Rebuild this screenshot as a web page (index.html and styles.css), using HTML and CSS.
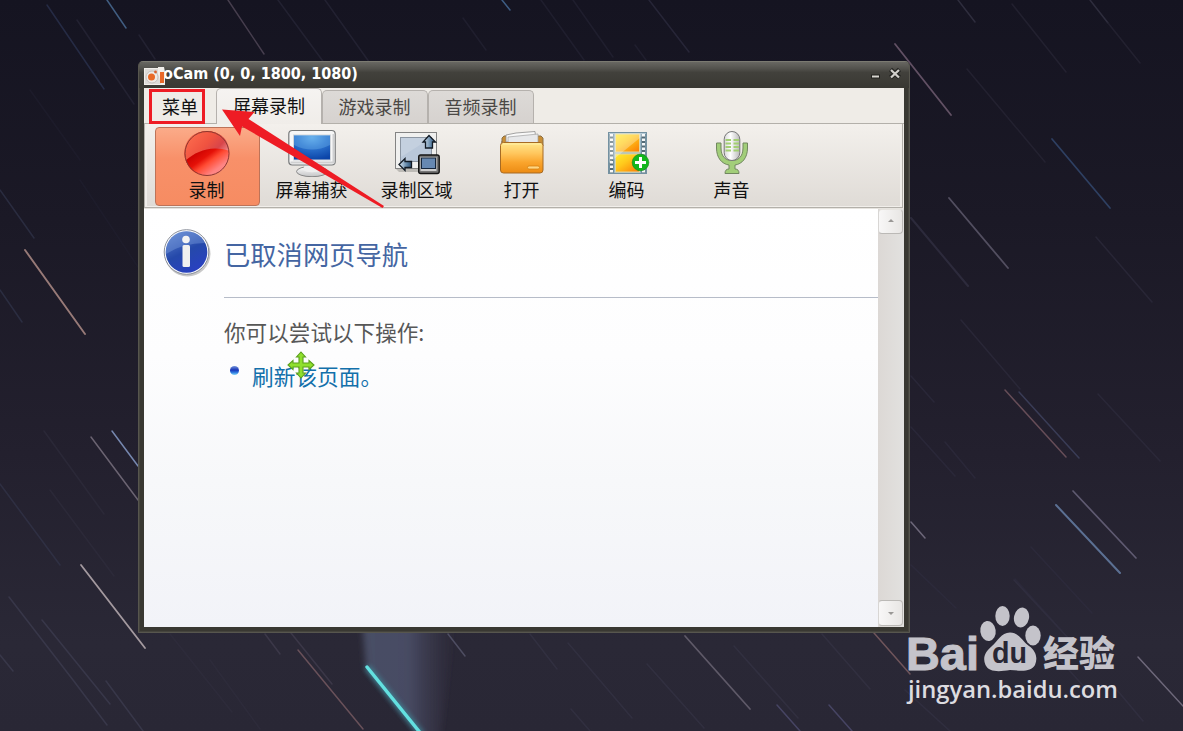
FILE: index.html
```html
<!DOCTYPE html>
<html lang="zh-CN">
<head>
  <meta charset="UTF-8" />
  <meta name="viewport" content="width=device-width, initial-scale=1" />
  <title>oCam</title>
  <link rel="stylesheet" href="styles.css">
</head>
<body>
  <div class="desktop">
    <svg class="sky" viewBox="0 0 1183 731" width="1183" height="731">
      <defs>
        <linearGradient id="tail" x1="0" y1="0" x2="1" y2="0">
          <stop offset="0" stop-color="#555d78" stop-opacity="0.7" />
          <stop offset="0.5" stop-color="#545a76" stop-opacity="0.7" />
          <stop offset="1" stop-color="#453e54" stop-opacity="0" />
        </linearGradient>
        <filter id="soft" x="-30%" y="-30%" width="160%" height="160%"><feGaussianBlur stdDeviation="3" /></filter>
        <filter id="glow" x="-30%" y="-30%" width="160%" height="160%"><feGaussianBlur stdDeviation="2.5" /></filter>
      </defs>
      <path d="M362 620H456L440 740H424L366 668z" fill="url(#tail)" filter="url(#soft)" />
      <path d="M367 667L422 735" stroke="#3fa9b8" stroke-width="6" opacity="0.6" filter="url(#glow)" />
      <path d="M367 667L422 735" stroke="#63e0e0" stroke-width="3.4" stroke-linecap="round" />
      <g class="trails faint">
        <path d="M47 5L104 89" stroke="#303a5c" />
        <path d="M139 35L155 59M77 20L134 104M278 0L325 64M325 0L372 66" stroke="#2b2a3c" />
        <path d="M0 190L34 238M0 290L22 322" stroke="#343951" />
        <path d="M30 90L80 160M80 180L140 270" stroke="#201f2f" />
        <path d="M0 484L60 565" stroke="#35384f" />
        <path d="M9 597L73 680L107 725M106 681L146 735M42 620L110 704M0 655L13 671" stroke="#424257" />
        <path d="M44 431L104 514M50 490L114 576M170 634L232 712M210 660L260 729" stroke="#302e3e" />
        <path d="M291 633L332 684M265 634L280 654" stroke="#474254" />
        <path d="M649 0L689 52" stroke="#323146" />
        <path d="M463 18L486 50M541 0L584 60M573 0L613 57M635 45L646 60" stroke="#262536" />
        <path d="M958 0L975 22M1090 0L1108 23" stroke="#3f3e50" />
        <path d="M1012 4L1066 72M967 69L1045 162M1108 23L1140 63" stroke="#2b2939" />
        <path d="M911 218L968 286" stroke="#38364a" stroke-width="2" />
        <path d="M1096 237L1152 302M961 320L1020 389M1098 394L1160 461" stroke="#302e40" />
        <path d="M911 376L934 402M911 427L955 476M945 442L975 478M911 565L956 608M1031 547L1092 613M1015 579L1062 631" stroke="#2f2d40" />
        <path d="M568 643L632 718M647 664L704 728M734 646L798 718M822 634L870 689M571 709L590 731M530 634L557 669" stroke="#373547" />
        <path d="M1014 580L1070 640M1117 690L1143 721M1060 660L1095 699M905 690L950 731" stroke="#353346" />
      </g>
      <g class="trails bright">
        <path d="M107 0L126 28" stroke="#47688f" />
        <path d="M228 0L264 54" stroke="#4d4454" />
        <path d="M25 250L85 334" stroke="#a98883" stroke-width="1.9" />
        <path d="M112 431L138 466" stroke="#8296c1" />
        <path d="M91 437L138 500" stroke="#756d7b" />
        <path d="M81 565L145 648" stroke="#b5aaae" stroke-width="1.8" />
        <path d="M298 650L363 729" stroke="#72575f" />
        <path d="M502 0L510 10" stroke="#436791" />
        <path d="M895 44L951 115" stroke="#6c596d" stroke-width="1.8" />
        <path d="M1052 139L1110 208" stroke="#31466b" stroke-width="1.7" />
        <path d="M949 198L1008 268" stroke="#5a5668" stroke-width="1.8" />
        <path d="M1005 390L1066 457" stroke="#70545e" />
        <path d="M1019 392L1079 458" stroke="#3d405c" />
        <path d="M1073 491L1136 558" stroke="#67627a" stroke-width="1.7" />
        <path d="M1056 505L1120 573" stroke="#637ba1" stroke-width="2" />
        <path d="M911 522L925 538M1138 657L1183 706" stroke="#777184" />
        <path d="M448 634L465 656" stroke="#535368" />
        <path d="M685 636L750 709" stroke="#67616f" stroke-width="1.7" />
        <path d="M777 705L800 731M829 705L852 731" stroke="#4b496a" />
        <path d="M874 633L910 674" stroke="#795b60" />
      </g>
    </svg>

    <div class="window">
      <div class="titlebar">
        <svg class="app-icon" viewBox="0 0 21 18" width="21" height="18">
          <path d="M0 1H14V0H20L21 5V18H0z" fill="#f1eeea" />
          <path d="M1 2H14V7L17 17H1z" fill="#dedbd8" />
          <circle cx="8" cy="10" r="6" fill="#eeeae7" stroke="#c6c1be" />
          <circle cx="7.5" cy="10" r="3.5" fill="#e96a28" />
          <circle cx="11.5" cy="5" r="1.4" fill="#d9622d" />
          <path d="M16 5h4v11h-4z" fill="#e8682a" />
        </svg>
        <span class="title">oCam (0, 0, 1800, 1080)</span>
        <svg class="controls" viewBox="0 0 32 14" width="32" height="14">
          <path d="M1 9.500h9" stroke="#22221f" stroke-width="4" />
          <path d="M2 9.500h7" stroke="#d8d6d1" stroke-width="2" />
          <path d="M20.500 2.500l9 8M29.500 2.500l-9 8" stroke="#252522" stroke-width="4.500" />
          <path d="M21 3l8 7.500M29 3l-8 7.500" stroke="#d2d0cb" stroke-width="2.300" />
        </svg>
      </div>

      <div class="client">
        <div class="tabs">
          <div class="menu">菜单</div>
          <div class="tab active">屏幕录制</div>
          <div class="tab">游戏录制</div>
          <div class="tab">音频录制</div>
        </div>

        <div class="toolbar">
          <div class="tool selected">
            <svg viewBox="0 0 48 48" width="48" height="48">
              <defs>
                <linearGradient id="recLow" x1="0.2" y1="0.25" x2="0.75" y2="1">
                  <stop offset="0.2" stop-color="#c90000" />
                  <stop offset="0.45" stop-color="#e51108" />
                  <stop offset="0.6" stop-color="#ff4a32" />
                  <stop offset="0.85" stop-color="#ff8584" />
                </linearGradient>
                <linearGradient id="recTop" x1="0" y1="0" x2="1" y2="0.6">
                  <stop offset="0" stop-color="#ff7352" />
                  <stop offset="0.55" stop-color="#f05340" />
                  <stop offset="0.8" stop-color="#d8454a" />
                  <stop offset="1" stop-color="#f08585" />
                </linearGradient>
              </defs>
              <circle cx="24" cy="24.500" r="22.500" fill="url(#recLow)" />
              <path d="M2.500 31.500C-2 14 9 2 24 2C37 2 46 11 46.400 22C28 16 14 22 2.500 31.500z" fill="url(#recTop)" />
              <circle cx="24" cy="24.500" r="22" fill="none" stroke="#8b3930" stroke-width="1" />
            </svg>
            <span>录制</span>
          </div>
          <div class="tool">
            <svg viewBox="0 0 48 48" width="48" height="48">
              <defs>
                <radialGradient id="scr" cx="0.5" cy="0.1" r="0.9">
                  <stop offset="0" stop-color="#61abeb" />
                  <stop offset="0.45" stop-color="#2e75cf" />
                  <stop offset="1" stop-color="#0b44a8" />
                </radialGradient>
                <linearGradient id="metal" x1="0" y1="0" x2="0" y2="1">
                  <stop offset="0" stop-color="#ffffff" />
                  <stop offset="1" stop-color="#c3c4c5" />
                </linearGradient>
              </defs>
              <ellipse cx="24" cy="42.500" rx="15.500" ry="5.200" fill="url(#metal)" stroke="#888" />
              <path d="M17 35h14l2 6c-4 3-14 3-18 0z" fill="#eeeeee" />
              <rect x="0.800" y="1.500" width="46.400" height="34.500" rx="3.500" fill="#f7f7f7" stroke="#77797a" stroke-width="1.200" />
              <path d="M2.500 33.500H45.500V5" fill="none" stroke="#cfd0d1" stroke-width="2" />
              <rect x="5.500" y="6" width="37" height="25" fill="url(#scr)" stroke="#d1d5da" />
              <path d="M6 6h36v10q-18 9-36 0z" fill="#75b9ef" opacity="0.350" />
            </svg>
            <span>屏幕捕获</span>
          </div>
          <div class="tool">
            <svg viewBox="0 0 48 48" width="48" height="48">
              <defs>
                <linearGradient id="arrowFill" x1="0" y1="0" x2="1" y2="0">
                  <stop offset="0" stop-color="#dce9f4" />
                  <stop offset="0.7" stop-color="#547b9f" />
                  <stop offset="1" stop-color="#2e4d6e" />
                </linearGradient>
              </defs>
              <path d="M3 40H42V43H6z" fill="#bdbbb6" />
              <rect x="2.500" y="3.500" width="41" height="36" fill="#f0f0ef" stroke="#838383" />
              <rect x="7.500" y="8.500" width="31" height="24" fill="#b9c7d9" stroke="#8c96a3" />
              <path d="M8 9H38L8 28z" fill="#cbd5e2" opacity="0.600" />
              <path d="M36 6.500L42.500 13H39.500V19H32.500V13H30z" fill="url(#arrowFill)" stroke="#111923" stroke-width="1.300" />
              <path d="M6 35.500L12 29.500V32.500H18.500V38.500H12V41.500z" fill="url(#arrowFill)" stroke="#111923" stroke-width="1.300" />
              <rect x="25.700" y="26" width="20.500" height="18.500" rx="2" fill="#777" stroke="#151515" stroke-width="1.400" />
              <rect x="27.500" y="28" width="16" height="14" fill="#cecece" />
              <rect x="28.500" y="29" width="14" height="10.500" fill="#6688b2" stroke="#15263d" />
            </svg>
            <span>录制区域</span>
          </div>
          <div class="tool">
            <svg viewBox="0 0 48 48" width="48" height="48">
              <defs>
                <linearGradient id="folder" x1="0" y1="0" x2="0" y2="1">
                  <stop offset="0" stop-color="#ffe78b" />
                  <stop offset="0.35" stop-color="#ffc75e" />
                  <stop offset="0.65" stop-color="#faa52d" />
                  <stop offset="1" stop-color="#ec8b13" />
                </linearGradient>
              </defs>
              <path d="M4 14V9L6 7H10V14M38 7H43L45 9V17H4V12" fill="#c98e35" stroke="#8b7047" />
              <path d="M8 6L18 4L37 2.500L38 13H8z" fill="#f9f9f9" stroke="#8e8e8e" stroke-width="0.800" />
              <path d="M10 8L40 5V14H10z" fill="#e7e8ea" stroke="#a0a0a0" stroke-width="0.700" />
              <rect x="2.500" y="13.500" width="42.500" height="30.500" rx="3" fill="url(#folder)" stroke="#a76b24" />
              <path d="M4.500 15h39" stroke="#fff0a5" />
              <rect x="29.500" y="37" width="12" height="3" rx="1.500" fill="#ffd682" stroke="#d17b0d" stroke-width="0.700" />
            </svg>
            <span>打开</span>
          </div>
          <div class="tool">
            <svg viewBox="0 0 48 48" width="48" height="48">
              <defs>
                <linearGradient id="film" x1="0.1" y1="0" x2="1" y2="1">
                  <stop offset="0" stop-color="#ffe92e" />
                  <stop offset="0.4" stop-color="#ffc91c" />
                  <stop offset="1" stop-color="#fb7904" />
                </linearGradient>
              </defs>
              <rect x="5.500" y="3.500" width="38" height="41" fill="#98b7c7" stroke="#7491a1" />
              <path d="M8.500 5V44M40.500 5V44" stroke="#536a76" stroke-width="4" />
              <path d="M8.500 5V44M40.500 5V44" stroke="#f5f7f8" stroke-width="3" stroke-dasharray="2.600 1.900" />
              <rect x="12.500" y="5" width="24" height="18" fill="url(#film)" stroke="#e2d7a1" />
              <rect x="12.500" y="25" width="24" height="18" fill="url(#film)" stroke="#e2d7a1" />
              <path d="M6 4H43L6 34z" fill="#fff" opacity="0.300" />
              <circle cx="37.500" cy="33.500" r="8.300" fill="#12b61c" stroke="#109117" stroke-width="0.700" />
              <path d="M37.500 28v11M32 33.500h11" stroke="#fff" stroke-width="3" />
            </svg>
            <span>编码</span>
          </div>
          <div class="tool">
            <svg viewBox="0 0 48 48" width="48" height="48">
              <defs>
                <linearGradient id="mic" x1="0" y1="0" x2="1" y2="0">
                  <stop offset="0" stop-color="#d7d7d7" />
                  <stop offset="0.4" stop-color="#ffffff" />
                  <stop offset="1" stop-color="#bababa" />
                </linearGradient>
              </defs>
              <path d="M8.500 14H13V19C13 28 18 31.500 24 31.500S35 28 35 19V14H39.500V19C39.500 29 34 35 27 36V40Q31 40 31 44.500H17Q17 40 21 40V36C14 35 8.500 29 8.500 19z" fill="#a2ce79" stroke="#71875f" />
              <rect x="16.200" y="2.500" width="15.600" height="29" rx="7.800" fill="url(#mic)" stroke="#777" />
              <path d="M17.500 11H23M25.500 11H31M17.500 14.500H23M25.500 14.500H31M17.500 18H23M25.500 18H31M17.500 21.500H23M25.500 21.500H31" stroke="#a3cf74" stroke-width="2" />
            </svg>
            <span>声音</span>
          </div>
        </div>

        <div class="browser">
          <div class="page">
            <svg class="info" viewBox="0 0 50 50" width="50" height="50">
              <defs>
                <linearGradient id="blue" x1="0.2" y1="0" x2="0.7" y2="1">
                  <stop offset="0" stop-color="#587dcb" />
                  <stop offset="0.5" stop-color="#2549aa" />
                  <stop offset="1" stop-color="#2940c2" />
                </linearGradient>
              </defs>
              <circle cx="25.500" cy="26.500" r="23" fill="#777" opacity="0.400" />
              <circle cx="24.500" cy="25" r="22.300" fill="#fff" stroke="#8a8f9a" />
              <circle cx="24.500" cy="25" r="20.800" fill="url(#blue)" />
              <path d="M4 27A20.500 20.500 0 0 1 43 16Q21 16 4 27z" fill="#8aabe4" opacity="0.350" />
              <circle cx="24" cy="12.500" r="3.800" fill="#f3f3f3" />
              <rect x="20.500" y="18" width="7.500" height="22" rx="1.500" fill="#f0f0f0" />
            </svg>
            <div class="message">
              <h1>已取消网页导航</h1>
              <p>你可以尝试以下操作:</p>
              <ul>
                <li><a>刷新该页面。</a></li>
              </ul>
            </div>
          </div>
          <div class="scrollbar">
            <div class="scroll-btn up"><i></i></div>
            <div class="scroll-btn down"><i></i></div>
          </div>
        </div>
      </div>
    </div>

    <!-- marks on top of the window -->
    <div class="mark-box"></div>
    <svg class="mark-arrow" viewBox="0 0 164 101" width="164" height="101">
      <path d="M1 2.500L33.500 5L27.500 12L163 99L161.500 101L21 19.500L19 29z" fill="#ee1c24" />
    </svg>
    <svg class="move-cursor" viewBox="0 0 28 28" width="28" height="28">
      <path d="M14 1L18.500 6H16V12H22V9.500L27 14L22 18.500V16H16V22H18.500L14 27L9.500 22H12V16H6V18.500L1 14L6 9.500V12H12V6H9.500z" fill="#8fe02d" stroke="#5c9f1e" stroke-width="1.100" />
    </svg>

    <svg class="watermark" viewBox="0 0 220 110" width="220" height="110">
      <g fill="#c4c3ca">
        <text class="wm-bai" x="6" y="70" textLength="73" lengthAdjust="spacingAndGlyphs">Bai</text>
        <ellipse cx="88" cy="31" rx="7.700" ry="10" transform="rotate(-8 88 31)" />
        <ellipse cx="102.500" cy="16" rx="7.200" ry="10" />
        <ellipse cx="121.500" cy="17.500" rx="7.500" ry="10" transform="rotate(12 121.500 17.500)" />
        <ellipse cx="133" cy="35.500" rx="7.700" ry="10" />
        <path d="M110 32.500C119 32.500 122 41 129 46C136 51 138 58 135 65C131 72 122 71 110 70C98 72 89 72 85.500 65C82 57 86 51 92 46C98 41 101 32.500 110 32.500z" />
        <text class="wm-cn" x="143" y="67" textLength="72" lengthAdjust="spacingAndGlyphs">经验</text>
      </g>
      <text class="wm-du" x="92" y="63" textLength="35" lengthAdjust="spacingAndGlyphs">du</text>
      <text class="wm-url" x="8" y="98" textLength="210" lengthAdjust="spacingAndGlyphs">jingyan.baidu.com</text>
    </svg>
  </div>
</body>
</html>
```

FILE: styles.css
```css
html, body {
  margin: 0;
  padding: 0;
  height: 100%;
  overflow: hidden;
  font-family: "Noto Sans CJK SC", sans-serif;
}
.desktop {
  position: relative;
  width: 1183px;
  height: 731px;
  overflow: hidden;
  background: linear-gradient(#151421 0%, #1b1926 30%, #23202e 62%, #2a2836 88%, #292735 100%);
}
.sky {
  position: absolute;
  left: 0;
  top: 0;
}
.trails {
  fill: none;
  stroke-width: 1.5px;
  stroke-linecap: round;
}
.trails.faint {
  opacity: 0.6;
}
.trails.bright {
  opacity: 0.88;
}
.window {
  position: absolute;
  left: 138px;
  top: 61px;
  width: 772px;
  height: 572px;
  box-sizing: border-box;
  display: flex;
  flex-direction: column;
  padding: 0 5px 5px;
  border: 1px solid #57564e;
  border-top-color: #7b7a71;
  border-radius: 5px 5px 1px 1px;
  background: #393832;
  box-shadow: inset 0 0 0 1px #45443d;
}
.titlebar {
  flex: none;
  display: flex;
  align-items: center;
  height: 26px;
  margin: 0 -5px;
  padding: 0 7px 0 5px;
  border-radius: 4px 4px 0 0;
  background: linear-gradient(#686762, #53524d 25%, #42413c 40%, #393832);
}
.app-icon {
  flex: none;
  margin-top: 2px;
  z-index: 1;
}
.title {
  margin: -2px 0 0 -2px;
  color: #fff;
  font: bold 16px/24px "DejaVu Sans Condensed", "DejaVu Sans", sans-serif;
  font-stretch: condensed;
  white-space: nowrap;
}
.controls {
  margin-left: auto;
  margin-top: -3px;
}
.client {
  flex: 1;
  display: flex;
  flex-direction: column;
  min-height: 0;
  background: #efece7;
}
.tabs {
  display: flex;
  align-items: flex-end;
  height: 35px;
  border-bottom: 1px solid #b3b0aa;
  font-size: 18px;
  line-height: 30px;
}
.menu {
  width: 72px;
  box-sizing: border-box;
  padding: 0 0 2px 18px;
  color: #111;
}
.tab {
  width: 106px;
  height: 33px;
  box-sizing: border-box;
  border: 1px solid #b5b1ad;
  border-bottom: none;
  border-radius: 5px 5px 0 0;
  padding-right: 1px;
  background: linear-gradient(#dddad7, #d6d2cf);
  color: #4b4846;
  text-align: center;
}
.tab.active {
  height: 36px;
  margin-bottom: -1px;
  padding-right: 0;
  background: linear-gradient(#f5f3f1, #f0ede9);
  color: #111;
  line-height: 32px;
}
.toolbar {
  flex: none;
  display: flex;
  box-sizing: border-box;
  height: 84px;
  margin-right: 1px;
  padding: 3px 10px 1px;
  border: 1px solid #b3b0aa;
  border-top: none;
  background: linear-gradient(#f3f0ec, #dfdbd6);
  box-shadow: inset -2px -1px 0 #f1eeea, inset 2px 0 0 #f1eeea;
}
.tool {
  width: 105px;
  height: 79px;
  box-sizing: border-box;
  display: flex;
  flex-direction: column;
  align-items: center;
  padding: 2px 2px 0 0;
  color: #111;
  font-size: 18px;
}
.tool svg {
  flex: none;
}
.tool span {
  line-height: 24px;
  white-space: nowrap;
}
.tool.selected {
  padding-top: 1px;
  border: 1px solid #bd7358;
  border-radius: 4px;
  background: linear-gradient(#fbab89, #f89069 40%, #f68c62);
}
.browser {
  flex: 1;
  display: flex;
  min-height: 0;
  border-top: 1px solid #e7e4df;
}
.page {
  flex: 1;
  display: flex;
  padding: 18px 0 0 18px;
  background: linear-gradient(#fff, #fdfdfe 35%, #f7f8fa 65%, #f2f3f8);
}
.info {
  flex: none;
}
.message {
  flex: 1;
  margin-left: 12px;
  color: #575757;
}
.message h1 {
  margin: 0;
  height: 70px;
  border-bottom: 1px solid #b6bcc8;
  color: #4465a2;
  font-size: 26.3px;
  font-weight: 400;
  line-height: 54px;
}
.message p {
  margin: 14px 0 0;
  font-size: 21.6px;
  line-height: 40px;
}
.message ul {
  margin: 2px 0 0;
  padding: 0;
  list-style: none;
}
.message li {
  display: flex;
  font-size: 21.7px;
  line-height: 44px;
}
.message li::before {
  content: "";
  width: 9px;
  height: 9px;
  margin: 12px 13px 0 6px;
  border-radius: 50%;
  background: linear-gradient(#7395da, #1834b8 45%, #2b73dd 70%, #82d8f8);
}
.message a {
  color: #1370ab;
}
.scrollbar {
  width: 26px;
  display: flex;
  flex-direction: column;
  justify-content: space-between;
  align-items: flex-start;
  background: linear-gradient(90deg, #dcd8d5, #e2e1df);
}
.scroll-btn {
  width: 25px;
  height: 26px;
  box-sizing: border-box;
  display: flex;
  align-items: center;
  justify-content: center;
  border: 1px solid #bbb9b6;
  border-left-color: #d8d6d4;
  border-radius: 4px;
  background: linear-gradient(90deg, #f8f7f7, #e8e6e4);
}
.scroll-btn i {
  border: 3px solid transparent;
}
.scroll-btn.up {
  height: 25px;
  border-top-color: #e7e4df;
}
.scroll-btn.up i {
  margin-top: -3px;
  border-top: none;
  border-bottom-color: #9a9896;
}
.scroll-btn.down {
  margin-bottom: 1px;
}
.scroll-btn.down i {
  border-bottom: none;
  border-top-color: #9a9896;
}
.mark-box {
  position: absolute;
  left: 149px;
  top: 89px;
  width: 56px;
  height: 35px;
  box-sizing: border-box;
  border: 3px solid #ee1c24;
}
.mark-arrow {
  position: absolute;
  left: 221px;
  top: 107px;
}
.move-cursor {
  position: absolute;
  left: 287px;
  top: 351px;
}
.watermark {
  position: absolute;
  left: 900px;
  top: 600px;
}
.wm-bai {
  font: bold 46px "Liberation Sans", sans-serif;
  stroke: #c4c3ca;
  stroke-width: 1px;
}
.wm-cn {
  font: 900 36px "Noto Sans CJK SC", sans-serif;
}
.wm-du {
  fill: #292735;
  font: bold 30px "Liberation Sans", sans-serif;
}
.wm-url {
  fill: #dddce0;
  font: 600 24px "Open Sans", sans-serif;
}
```
